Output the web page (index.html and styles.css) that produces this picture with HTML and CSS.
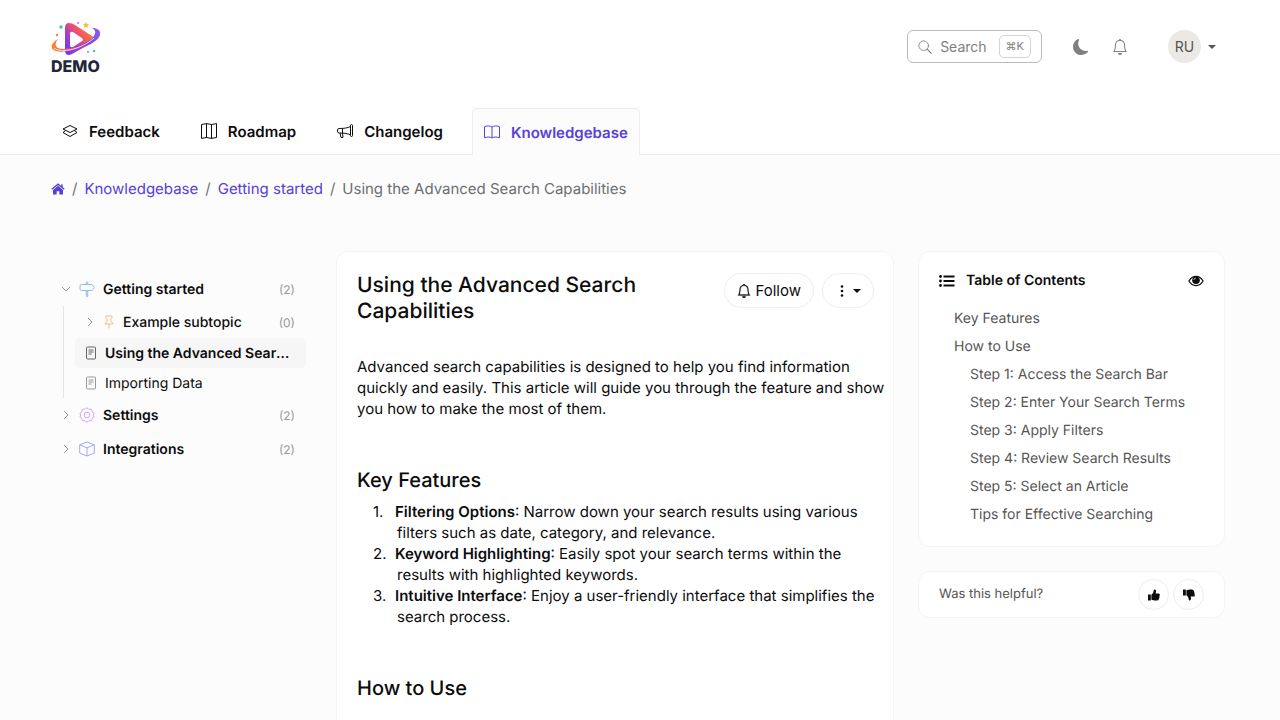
FILE: index.html
```html
<!DOCTYPE html>
<html lang="en">
<head>
  <meta charset="UTF-8">
  <meta name="viewport" content="width=device-width, initial-scale=1.0">
  <title>Using the Advanced Search Capabilities</title>
  <link rel="stylesheet" href="styles.css">
</head>
<body>
  <header class="site-header">
    <div class="topbar">
      <a href="#" class="logo" aria-label="Demo">
        <svg viewBox="0 0 50 54" width="50" height="54">
          <defs>
            <linearGradient id="play" x1="0" y1="1" x2="1" y2="0.2">
              <stop offset="0" stop-color="#5b3df0" />
              <stop offset="0.35" stop-color="#a03fd0" />
              <stop offset="0.6" stop-color="#f0506a" />
              <stop offset="1" stop-color="#f9901f" />
            </linearGradient>
            <linearGradient id="swoosh" x1="0" y1="0" x2="1" y2="0">
              <stop offset="0" stop-color="#ff8a2a" />
              <stop offset="0.35" stop-color="#ef4a6a" />
              <stop offset="0.7" stop-color="#7a3fe0" />
              <stop offset="1" stop-color="#8c5cf0" />
            </linearGradient>
          </defs>
          <path d="M18 3 Q14 3 14 8 V31 Q15 37 21 34 L41 23 Q46 19 41 16 L24 5 Q21 3 18 3Z" fill="url(#play)" />
          <path d="M19 14 Q19 11 22 12 L31 18 Q33 20 31 21 L22 27 Q19 28 19 25Z" fill="#fff" />
          <path d="M7 19 C-5 26 1 34 16 31 C30 29 47 23 49 15 C50 10 46 8 41 8 C47 11 45 18 32 24 C20 29 7 31 5 26 C4 24 5 21 7 19Z" fill="url(#swoosh)" />
          <path d="M3 28 C10 34 31 29 43 18" fill="none" stroke="#fff" stroke-width="0.8" />
          <path d="M35 2 l1 2 2 .3 -1.5 1.5 .4 2.2 -1.9-1 -1.9 1 .4-2.2 -1.5-1.5 2-.3Z" fill="#fdb83a" />
          <circle cx="10" cy="7" r="1.7" fill="#3fc9a0" />
          <circle cx="6" cy="15" r="1.2" fill="#ff7a4a" />
          <circle cx="27" cy="3" r="0.9" fill="#a36af0" />
          <circle cx="43" cy="31" r="1.3" fill="#4ac6c0" />
          <circle cx="37" cy="32" r="0.9" fill="#5a8cf0" />
          <text x="0" y="52" class="logo-text">DEMO</text>
        </svg>
      </a>
      <div class="topbar-actions">
        <button type="button" class="search-button">
          <svg class="icon" viewBox="0 0 16 16" width="14" height="14" fill="none" stroke="currentColor" stroke-linecap="round">
            <circle cx="6.5" cy="6.5" r="5.5" />
            <path d="M10.7 10.7 L15 15" stroke-width="1.5" />
          </svg>
          <span>Search</span>
          <kbd>⌘K</kbd>
        </button>
        <button type="button" class="icon-button" aria-label="Dark mode">
          <svg class="icon" viewBox="0 0 16 16" width="16" height="16" fill="currentColor">
            <path d="M6 .3a.8.8 0 0 1 .1.8 7.2 7.2 0 0 0-.9 3.5c0 4 3.3 7.3 7.3 7.3q.8 0 1.6-.2a.8.8 0 0 1 .8.4.7.7 0 0 1 0 .8A8.4 8.4 0 0 1 8.300 16C3.700 16 0 12.300 0 7.700 0 4.300 2.100 1.300 5.100.1A.8.8 0 0 1 6 .3" />
          </svg>
        </button>
        <button type="button" class="icon-button bell-button" aria-label="Notifications">
          <svg class="icon" viewBox="0 0 16 16" width="16" height="16" fill="currentColor">
            <path d="M8 16a2 2 0 0 0 2-2H6a2 2 0 0 0 2 2M8 1.918l-.797.161A4 4 0 0 0 4 6c0 .628-.134 2.197-.459 3.742-.16.767-.376 1.566-.663 2.258h10.244c-.287-.692-.502-1.49-.663-2.258C12.134 8.197 12 6.628 12 6a4 4 0 0 0-3.203-3.92zM14.22 12c.223.447.481.801.78 1H1c.299-.199.557-.553.78-1C2.68 10.2 3 6.88 3 6c0-2.42 1.72-4.44 4.005-4.901a1 1 0 1 1 1.99 0A5 5 0 0 1 13 6c0 .88.32 4.2 1.22 6" />
          </svg>
        </button>
        <button type="button" class="user-button" aria-label="Account menu">
          <span class="avatar">RU</span>
          <span class="caret"></span>
        </button>
      </div>
    </div>

    <nav class="tabs">
      <a href="#" class="tab">
        <svg class="icon" viewBox="0 0 16 16" width="16" height="16" fill="none" stroke="currentColor" stroke-linejoin="round">
          <path d="M8 2.500 L15 6 L8 9.500 L1 6Z" />
          <path d="M3.600 7.500 L1 9.500 L8 13.500 L15 9.500 L12.400 7.500" />
        </svg>
        Feedback
      </a>
      <a href="#" class="tab">
        <svg class="icon" viewBox="0 0 16 16" width="16" height="16" fill="none" stroke="currentColor" stroke-linejoin="round">
          <path d="M.5 1.500 L5.500 .6 L10.500 1.500 L15.500 .6 V14.500 L10.500 15.400 L5.500 14.500 L.5 15.400Z M5.500 .6 V14.500 M10.500 1.500 V15.400" />
        </svg>
        Roadmap
      </a>
      <a href="#" class="tab">
        <svg class="icon" viewBox="0 0 16 16" width="16" height="16" fill="none" stroke="currentColor" stroke-linejoin="round">
          <path d="M13.500 2.500 a1 1 0 0 1 2 0 V12.500 a1 1 0 0 1-2 0Z" />
          <path d="M13.500 3.500 C11 5 6.500 5.500 2.200 5.500 Q.5 5.600 .5 7 V8.500 Q.5 9.800 2.200 10 C7 10 11 10.500 13.500 12 M5.500 5.500 V10 M3 10 L4 14.500 H6 L5.500 10" />
        </svg>
        Changelog
      </a>
      <a href="#" class="tab active" aria-current="page">
        <svg class="icon" viewBox="0 0 16 16" width="16" height="16" fill="none" stroke="currentColor" stroke-linejoin="round">
          <path d="M8 3 C6 1.600 3 1.700 .5 2.700 V13.800 C3 12.800 6 12.700 8 14 C10 12.700 13 12.800 15.500 13.800 V2.700 C13 1.700 10 1.600 8 3Z M8 3 V14" />
        </svg>
        Knowledgebase
      </a>
    </nav>
  </header>

  <div class="page">
    <nav class="breadcrumb" aria-label="Breadcrumb">
      <a href="#" class="home-link" aria-label="Home">
        <svg class="icon" viewBox="0 0 14 12" width="14" height="12" fill="currentColor">
          <path d="M7 2.800 L12 7 V11 Q12 11.600 11.400 11.600 H8.300 V8.200 H5.700 V11.600 H2.600 Q2 11.600 2 11 V7Z" />
          <path d="M.8 6.300 L7 1.200 L13.200 6.300 M11 1.200 V4" fill="none" stroke="currentColor" stroke-width="1.400" />
        </svg>
      </a>
      <span class="separator">/</span>
      <a href="#">Knowledgebase</a>
      <span class="separator">/</span>
      <a href="#">Getting started</a>
      <span class="separator">/</span>
      <span>Using the Advanced Search Capabilities</span>
    </nav>

    <div class="columns">
      <nav class="sidebar" aria-label="Topics">
        <a href="#" class="topic">
          <svg class="chevron" viewBox="0 0 10 10" width="10" height="10"><path d="M1 3 L5 7 L9 3" /></svg>
          <svg class="icon topic-icon blue" viewBox="0 0 16 16" width="16" height="16">
            <path d="M7.300 3.500 V1.500 a.7.7 0 0 1 1.400 0 V3.500 M7.300 9.500 V15.500 H8.700 V9.500 M2.500 3.500 H13 L15.300 6.500 L13 9.500 H2.500 Q1 9.500 1 8 V5 Q1 3.500 2.500 3.500Z" />
          </svg>
          <span class="topic-name">Getting started</span>
          <span class="count">(2)</span>
        </a>
        <div class="subtree">
          <a href="#" class="topic subtopic">
            <svg class="chevron" viewBox="0 0 10 10" width="10" height="10"><path d="M3 1 L7 5 L3 9" /></svg>
            <svg class="icon topic-icon orange" viewBox="0 0 12 14" width="12" height="14">
              <path d="M3 1 H9 V2.500 L8 3.500 V6.500 Q10 7.500 10 9 H2 Q2 7.500 4 6.500 V3.500 L3 2.500Z M6 9 V13.500" />
            </svg>
            <span class="topic-name">Example subtopic</span>
            <span class="count">(0)</span>
          </a>
          <a href="#" class="article-link current" aria-current="page">
            <svg class="icon" viewBox="0 0 12 14" width="12" height="14">
              <path d="M2.500 1 H9.500 Q10.500 1 10.500 2 V12 Q10.500 13 9.500 13 H2.500 Q1.500 13 1.500 12 V2 Q1.500 1 2.500 1Z M3.500 4 H8.500 M3.500 6 H8.500 M3.500 8 H6.500" />
            </svg>
            <span>Using the Advanced Search Capabilities</span>
          </a>
          <a href="#" class="article-link">
            <svg class="icon" viewBox="0 0 12 14" width="12" height="14">
              <path d="M2.500 1 H9.500 Q10.500 1 10.500 2 V12 Q10.500 13 9.500 13 H2.500 Q1.500 13 1.500 12 V2 Q1.500 1 2.500 1Z M3.500 4 H8.500 M3.500 6 H8.500 M3.500 8 H6.500" />
            </svg>
            <span>Importing Data</span>
          </a>
        </div>
        <a href="#" class="topic">
          <svg class="chevron" viewBox="0 0 10 10" width="10" height="10"><path d="M3 1 L7 5 L3 9" /></svg>
          <svg class="icon topic-icon purple" viewBox="0 0 16 16" width="16" height="16">
            <circle cx="8" cy="8" r="2.800" />
            <path d="M6.900 1.500 Q8 .1 9.100 1.500 Q9.600 2.700 10.800 2.200 Q12.600 1.600 12.900 3.100 Q12.400 4.900 13.800 5.200 Q15.500 6 14.800 7.200 Q13.600 8 14.800 9 Q15.400 10.300 13.800 10.900 Q12.500 11.200 13 12.700 Q12.500 14.300 10.900 13.800 Q9.600 13.300 9.100 14.500 Q8 15.900 6.900 14.500 Q6.400 13.300 5.100 13.800 Q3.500 14.300 3 12.700 Q3.500 11.200 2.200 10.900 Q.6 10.300 1.200 9 Q2.400 8 1.200 7.200 Q.5 6 2.200 5.200 Q3.600 4.900 3.100 3.100 Q3.400 1.600 5.200 2.200 Q6.400 2.700 6.900 1.500Z" />
          </svg>
          <span class="topic-name">Settings</span>
          <span class="count">(2)</span>
        </a>
        <a href="#" class="topic">
          <svg class="chevron" viewBox="0 0 10 10" width="10" height="10"><path d="M3 1 L7 5 L3 9" /></svg>
          <svg class="icon topic-icon indigo" viewBox="0 0 16 16" width="16" height="16">
            <path d="M8 1 L15.300 3.800 V12 L8 15 L.7 12 V3.800Z M.7 3.800 L8 6.800 L15.300 3.800 M8 6.800 V15" />
          </svg>
          <span class="topic-name">Integrations</span>
          <span class="count">(2)</span>
        </a>
      </nav>

      <main class="card article">
        <div class="article-header">
          <h1>Using the Advanced Search Capabilities</h1>
          <div class="article-actions">
            <button type="button" class="pill follow">
              <svg class="icon" viewBox="0 0 16 16" width="14" height="14" fill="currentColor">
                <path d="M8 16a2 2 0 0 0 2-2H6a2 2 0 0 0 2 2M8 1.918l-.797.161A4 4 0 0 0 4 6c0 .628-.134 2.197-.459 3.742-.16.767-.376 1.566-.663 2.258h10.244c-.287-.692-.502-1.490-.663-2.258C12.134 8.197 12 6.628 12 6a4 4 0 0 0-3.203-3.920zM14.220 12c.223.447.481.801.78 1H1c.299-.199.557-.553.78-1C2.680 10.200 3 6.880 3 6c0-2.420 1.720-4.440 4.005-4.901a1 1 0 1 1 1.990 0A5 5 0 0 1 13 6c0 .88.32 4.200 1.220 6" stroke="currentColor" stroke-width="0.300" />
              </svg>
              Follow
            </button>
            <button type="button" class="pill more" aria-label="More actions">
              <svg class="icon" viewBox="0 0 4 14" width="4" height="14" fill="currentColor">
                <circle cx="2" cy="2.500" r="1.300" />
                <circle cx="2" cy="7" r="1.300" />
                <circle cx="2" cy="11.500" r="1.300" />
              </svg>
              <span class="caret"></span>
            </button>
          </div>
        </div>

        <p>Advanced search capabilities is designed to help you find information quickly and easily. This article will guide you through the feature and show you how to make the most of them.</p>

        <h2>Key Features</h2>
        <ol class="features">
          <li><strong>Filtering Options</strong>: Narrow down your search results using various filters such as date, category, and relevance.</li>
          <li><strong>Keyword Highlighting</strong>: Easily spot your search terms within the results with highlighted keywords.</li>
          <li><strong>Intuitive Interface</strong>: Enjoy a user-friendly interface that simplifies the search process.</li>
        </ol>

        <h2>How to Use</h2>
      </main>

      <aside class="aside">
        <section class="card toc">
          <div class="toc-header">
            <svg class="icon" viewBox="0 0 16 12" width="16" height="12" fill="currentColor">
              <circle cx="1.500" cy="1.500" r="1.400" />
              <circle cx="1.500" cy="6" r="1.400" />
              <circle cx="1.500" cy="10.500" r="1.400" />
              <path d="M4.500 .6 H15.500 V2.400 H4.500Z M4.500 5.100 H15.500 V6.900 H4.500Z M4.500 9.600 H15.500 V11.400 H4.500Z" />
            </svg>
            <h3>Table of Contents</h3>
            <button type="button" class="icon-button eye-button" aria-label="Toggle table of contents">
              <svg class="icon" viewBox="0 0 16 12" width="16" height="12">
                <path d="M.9 6 C4.500 -.1 11.500 -.1 15.100 6 C11.500 12.100 4.500 12.100 .9 6Z" fill="none" stroke="currentColor" stroke-width="1.200" />
                <circle cx="8" cy="5.200" r="3.800" fill="currentColor" />
                <path d="M5.900 5 Q6 3.200 7.800 3" fill="none" stroke="#fff" stroke-width="0.700" />
              </svg>
            </button>
          </div>
          <ul class="toc-list">
            <li><a href="#">Key Features</a></li>
            <li>
              <a href="#">How to Use</a>
              <ul>
                <li><a href="#">Step 1: Access the Search Bar</a></li>
                <li><a href="#">Step 2: Enter Your Search Terms</a></li>
                <li><a href="#">Step 3: Apply Filters</a></li>
                <li><a href="#">Step 4: Review Search Results</a></li>
                <li><a href="#">Step 5: Select an Article</a></li>
                <li><a href="#">Tips for Effective Searching</a></li>
              </ul>
            </li>
          </ul>
        </section>

        <section class="card helpful">
          <span>Was this helpful?</span>
          <button type="button" class="vote" aria-label="Yes">
            <svg class="icon" viewBox="0 0 12 12" width="12" height="12" fill="currentColor">
              <path d="M0 5.500 H2.800 V11.500 H0Z M3.400 5.700 C5.200 4.600 5.500 3.200 5.700 1.500 Q6 .3 7 .6 C8.600 1.200 8.100 3.200 7.600 4.400 H10.800 Q12 4.600 11.800 5.800 L11.500 7 L11.400 8.600 L10.900 10 Q10.500 11.500 9 11.500 H6.500 L3.400 10.800Z" />
            </svg>
          </button>
          <button type="button" class="vote" aria-label="No">
            <svg class="icon" viewBox="0 0 12 12" width="12" height="12" fill="currentColor">
              <path d="M0 .5 H2.800 V6.500 H0Z M3.400 6.300 C5.200 7.400 5.500 8.800 5.700 10.500 Q6 11.700 7 11.400 C8.600 10.800 8.100 8.800 7.600 7.600 H10.800 Q12 7.400 11.800 6.200 L11.500 5 L11.400 3.400 L10.900 2 Q10.500 .5 9 .5 H6.500 L3.400 1.200Z" />
            </svg>
          </button>
        </section>
      </aside>
    </div>
  </div>
</body>
</html>
```
FILE: styles.css
```css
:root {
  --primary: #5840d6;
  --text: #0c0c0d;
  --muted: #6b6f72;
  --gray: #555;
  --border: #ededed;
  --background: #fcfcfc;
  --page-left: 51px;
  --page-right: 55px;
}

* {
  margin: 0;
  padding: 0;
  box-sizing: border-box;
}

body {
  font-family: Inter, "Liberation Sans", sans-serif;
  font-size: 15px;
  line-height: 21px;
  text-rendering: geometricPrecision;
  color: var(--text);
  background-color: var(--background);
}

a {
  color: inherit;
  text-decoration: none;
}

button {
  font: inherit;
  color: inherit;
  background: none;
  border: none;
  cursor: pointer;
}

ul,
ol {
  list-style: none;
}

.icon {
  flex-shrink: 0;
}

.caret {
  border-left: 4px solid transparent;
  border-right: 4px solid transparent;
  border-top: 4px solid currentColor;
}

/* Header */
.site-header {
  background-color: #fff;
  border-bottom: 1px solid var(--border);
}

.topbar {
  display: flex;
  align-items: flex-start;
  justify-content: space-between;
  height: 108px;
  padding: 20px 64px 0 var(--page-left);
}

.logo svg {
  display: block;
  overflow: visible;
}

.logo-text {
  font-size: 16px;
  font-weight: 800;
  fill: #23263a;
}

.topbar-actions {
  display: flex;
  align-items: center;
  height: 53px;
  color: #808080;
}

.search-button {
  display: flex;
  align-items: center;
  height: 33px;
  padding: 0 10px;
  gap: 8px;
  border: 1px solid #bbb;
  border-radius: 6px;
  background-color: #fff;
  margin-right: 31px;
  font-size: 14px;
}

.search-button kbd {
  margin-left: 4px;
  padding: 0 6px;
  border: 1px solid #d5d5d5;
  border-radius: 5px;
  font-family: inherit;
  font-size: 11px;
}

.icon-button {
  display: flex;
}

.bell-button {
  margin-left: 23px;
}

.user-button {
  display: flex;
  align-items: center;
  gap: 7px;
  margin-left: 40px;
}

.user-button .caret {
  color: #555;
}

.avatar {
  width: 33px;
  height: 33px;
  border-radius: 50%;
  background-color: #ebe9e4;
  color: #555;
  font-size: 14px;
  line-height: 33px;
  text-align: center;
}

.tabs {
  display: flex;
  padding-left: 50px;
  margin-bottom: -1px;
}

.tab {
  display: flex;
  align-items: center;
  gap: 11px;
  height: 47px;
  margin-right: 17px;
  padding: 0 11px 2px;
  border: 1px solid transparent;
  border-bottom: none;
  border-radius: 5px 5px 0 0;
  font-weight: 600;
}

.tab.active {
  margin-right: 0;
  padding-bottom: 0;
  border-color: var(--border);
  background-color: var(--background);
  color: var(--primary);
}

/* Page */
.page {
  padding: 23px var(--page-right) 0 var(--page-left);
}

.breadcrumb {
  display: flex;
  align-items: center;
  gap: 7px;
  color: var(--muted);
}

.breadcrumb a {
  color: var(--primary);
}

.home-link {
  display: flex;
}

.columns {
  display: grid;
  grid-template-columns: 261px minmax(0, 1fr) 307px;
  gap: 24px;
  margin-top: 52px;
}

.card {
  background-color: #fff;
  border: 1px solid #f4f4f4;
  border-radius: 12px;
}

/* Sidebar tree */
.sidebar {
  padding: 21px 6px 0 10px;
  font-size: 14px;
}

.topic {
  display: flex;
  align-items: center;
  gap: 8px;
  height: 34px;
  padding-right: 11px;
  font-weight: 600;
}

.chevron {
  flex-shrink: 0;
  fill: none;
  stroke: #999;
}

.topic-icon {
  fill: none;
  stroke: currentColor;
}

.blue {
  color: #8fbcf5;
}

.orange {
  color: #f5bd80;
}

.purple {
  color: #d3a5f2;
}

.indigo {
  color: #a5a5f5;
}

.topic-name {
  flex-grow: 1;
}

.count {
  color: #999;
  font-size: 12px;
  font-weight: 400;
}

.subtree {
  margin-left: 2px;
  padding-left: 11px;
  border-left: 1px solid #e4e4e4;
}

.subtopic {
  height: 32px;
  padding-left: 10px;
  font-weight: 500;
}

.article-link {
  display: flex;
  align-items: center;
  gap: 8px;
  height: 30px;
  padding: 0 16px 0 10px;
  border-radius: 5px;
}

.article-link .icon {
  fill: none;
  stroke: #999;
}

.article-link span {
  overflow: hidden;
  text-overflow: ellipsis;
  white-space: nowrap;
}

.article-link.current {
  background-color: #f6f6f6;
  font-weight: 600;
}

.article-link.current .icon {
  stroke: #666;
}

/* Article */
.article {
  padding: 21px 8px 48px 20px;
}

.article-header {
  display: flex;
  align-items: flex-start;
  justify-content: space-between;
  gap: 20px;
  margin: 0 11px 31px 0;
}

h1,
h2 {
  font-size: 21px;
  font-weight: 500;
  line-height: 26px;
}

h2 {
  font-size: 20px;
}

.article-actions {
  display: flex;
  gap: 8px;
  flex-shrink: 0;
}

.pill {
  display: flex;
  align-items: center;
  gap: 4px;
  height: 35px;
  padding: 0 12px;
  border: 1px solid var(--border);
  border-radius: 18px;
  background-color: #fff;
}

.more {
  gap: 9px;
  padding: 0 12px 0 17px;
}

.article h2 {
  margin-top: 48px;
}

.features {
  counter-reset: feature;
  margin-top: 8px;
  padding-left: 40px;
}

.features li {
  counter-increment: feature;
  text-indent: -24px;
}

.features li::before {
  content: counter(feature) ".";
  display: inline-block;
  width: 22px;
  text-indent: 0;
}

.features strong {
  font-weight: 600;
}

/* Right column */
.aside {
  display: flex;
  flex-direction: column;
  gap: 24px;
}

.toc {
  padding: 18px 20px 17px;
  font-size: 14px;
}

.toc-header {
  display: flex;
  align-items: center;
  gap: 11px;
}

.toc-header h3 {
  flex-grow: 1;
  font-size: 14px;
  font-weight: 600;
}

.toc-list {
  margin-top: 14px;
  padding-left: 15px;
  color: var(--gray);
}

.toc-list ul {
  padding-left: 16px;
}

.toc-list a {
  display: block;
  line-height: 28px;
}

.helpful {
  display: flex;
  align-items: center;
  gap: 4px;
  padding: 7px 20px;
  color: var(--gray);
  font-size: 13px;
}

.helpful span {
  flex-grow: 1;
}

.vote {
  display: flex;
  align-items: center;
  justify-content: center;
  width: 31px;
  height: 31px;
  border: 1px solid var(--border);
  border-radius: 50%;
  color: var(--text);
}
```
